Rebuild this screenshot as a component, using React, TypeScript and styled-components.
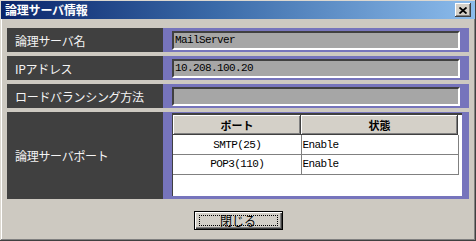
import React from "react";
import styled, { createGlobalStyle } from "styled-components";

const Global = createGlobalStyle`
  html, body { margin: 0; padding: 0; background: #d4d0c8; }
  body { font-family: "Noto Sans CJK JP", "Liberation Sans", sans-serif; }
  * { box-sizing: border-box; }
`;

const Window = styled.div`
  width: 476px;
  height: 241px;
  background: #cdc9c1;
  padding: 1px;
  display: flex;
  flex-direction: column;
  box-shadow: inset -1px -1px #404040, inset 1px 1px #dcd8d0, inset -2px -2px #808080, inset 2px 2px #ffffff;
`;

const TitleBar = styled.div`
  height: 18px;
  display: flex;
  align-items: center;
  justify-content: space-between;
  padding: 0 4px 0 4px;
  background: linear-gradient(90deg, #0a246a 0%, #3a6aa8 45%, #8cbcec 100%);
`;

const Title = styled.span`
  color: #ffffff;
  font-size: 12px;
  font-weight: bold;
  line-height: 14px;
  letter-spacing: -0.2px;
`;

const CloseButton = styled.div`
  width: 16px;
  height: 14px;
  background: #d4d0c8;
  display: flex;
  align-items: center;
  justify-content: center;
  box-shadow: inset -1px -1px #404040, inset 1px 1px #ffffff, inset -2px -2px #808080;
`;

const Content = styled.div`
  padding: 9px 6px 0 6px;
  display: grid;
  grid-template-columns: 156px 306px;
  grid-template-rows: 24px 24px 24px 87px;
  row-gap: 4px;
`;

const LabelCell = styled.div`
  background: #404040;
  color: #f4f4f4;
  font-size: 12px;
  display: flex;
  align-items: center;
  padding-left: 8px;
  letter-spacing: -0.3px;
`;

const ValueCell = styled.div<{ $tall?: boolean }>`
  background: #7674bc;
  padding: ${(p) => (p.$tall ? "1px 7px 3px 9px" : "3px 9px 2px 9px")};
  display: flex;
`;

const Field = styled.div`
  flex: 1;
  height: 19px;
  background: #a6a6a6;
  border-top: 2px solid #404040;
  border-left: 2px solid #404040;
  border-right: 2px solid #ffffff;
  border-bottom: 2px solid #ffffff;
  font-family: "Liberation Mono", monospace;
  font-size: 11px;
  letter-spacing: -0.6px;
  color: #000;
  line-height: 15px;
  padding-left: 1px;
  white-space: nowrap;
`;

const ListBox = styled.div`
  flex: 1;
  background: #ffffff;
  border-top: 2px solid #404040;
  border-left: 1px solid #404040;
`;

const Table = styled.table`
  border-collapse: collapse;
  table-layout: fixed;
  width: 285px;
`;

const HeadCell = styled.th<{ $w: number }>`
  width: ${(p) => p.$w}px;
  height: 20px;
  padding: 0;
  background: #d4d0c8;
  font-size: 11px;
  font-weight: bold;
  color: #000;
  text-align: center;
  box-shadow: inset -1px -1px #404040, inset 1px 1px #ffffff, inset -2px -2px #808080;
`;

const DataCell = styled.td<{ $center?: boolean }>`
  height: 19.5px;
  padding: 0 0 0 1px;
  border-bottom: 1px solid #808080;
  border-right: 1px solid #808080;
  font-family: "Liberation Mono", monospace;
  font-size: 11px;
  letter-spacing: -0.6px;
  color: #000;
  text-align: ${(p) => (p.$center ? "center" : "left")};
  white-space: nowrap;
`;

const Footer = styled.div`
  display: flex;
  justify-content: center;
  padding-top: 12px;
`;

const Button = styled.button`
  width: 89px;
  height: 19px;
  padding: 0;
  background: #d4d0c8;
  border: 1px solid #000;
  box-shadow: inset 1px 1px #ffffff, inset -1px -1px #404040, inset -2px -2px #808080;
  display: flex;
  align-items: center;
  justify-content: center;
  font-family: "Noto Sans CJK JP", sans-serif;
  font-size: 12px;
  color: #000;
`;

const FocusRect = styled.span`
  width: 79px;
  height: 11px;
  border: 1px dotted #000;
  display: flex;
  align-items: center;
  justify-content: center;
  line-height: 11px;
`;

const rows: { label: string; value: string }[] = [
  { label: "論理サーバ名", value: "MailServer" },
  { label: "IPアドレス", value: "10.208.100.20" },
  { label: "ロードバランシング方法", value: "" },
];

const ports = [
  { port: "SMTP(25)", state: "Enable" },
  { port: "POP3(110)", state: "Enable" },
];

export default function App() {
  return (
    <>
      <Global />
      <Window>
        <TitleBar>
          <Title>論理サーバ情報</Title>
          <CloseButton>
            <svg width="8" height="7" viewBox="0 0 8 7">
              <path d="M0.5 0.5 L7.5 6.5 M7.5 0.5 L0.5 6.5" stroke="#000" strokeWidth="1.8" />
            </svg>
          </CloseButton>
        </TitleBar>
        <Content>
          {rows.map((r) => (
            <React.Fragment key={r.label}>
              <LabelCell>{r.label}</LabelCell>
              <ValueCell>
                <Field>{r.value}</Field>
              </ValueCell>
            </React.Fragment>
          ))}
          <LabelCell>論理サーバポート</LabelCell>
          <ValueCell $tall>
            <ListBox>
              <Table>
                <thead>
                  <tr>
                    <HeadCell $w={128}>ポート</HeadCell>
                    <HeadCell $w={157}>状態</HeadCell>
                  </tr>
                </thead>
                <tbody>
                  {ports.map((p) => (
                    <tr key={p.port}>
                      <DataCell $center>{p.port}</DataCell>
                      <DataCell>{p.state}</DataCell>
                    </tr>
                  ))}
                </tbody>
              </Table>
            </ListBox>
          </ValueCell>
        </Content>
        <Footer>
          <Button>
            <FocusRect>閉じる</FocusRect>
          </Button>
        </Footer>
      </Window>
    </>
  );
}
